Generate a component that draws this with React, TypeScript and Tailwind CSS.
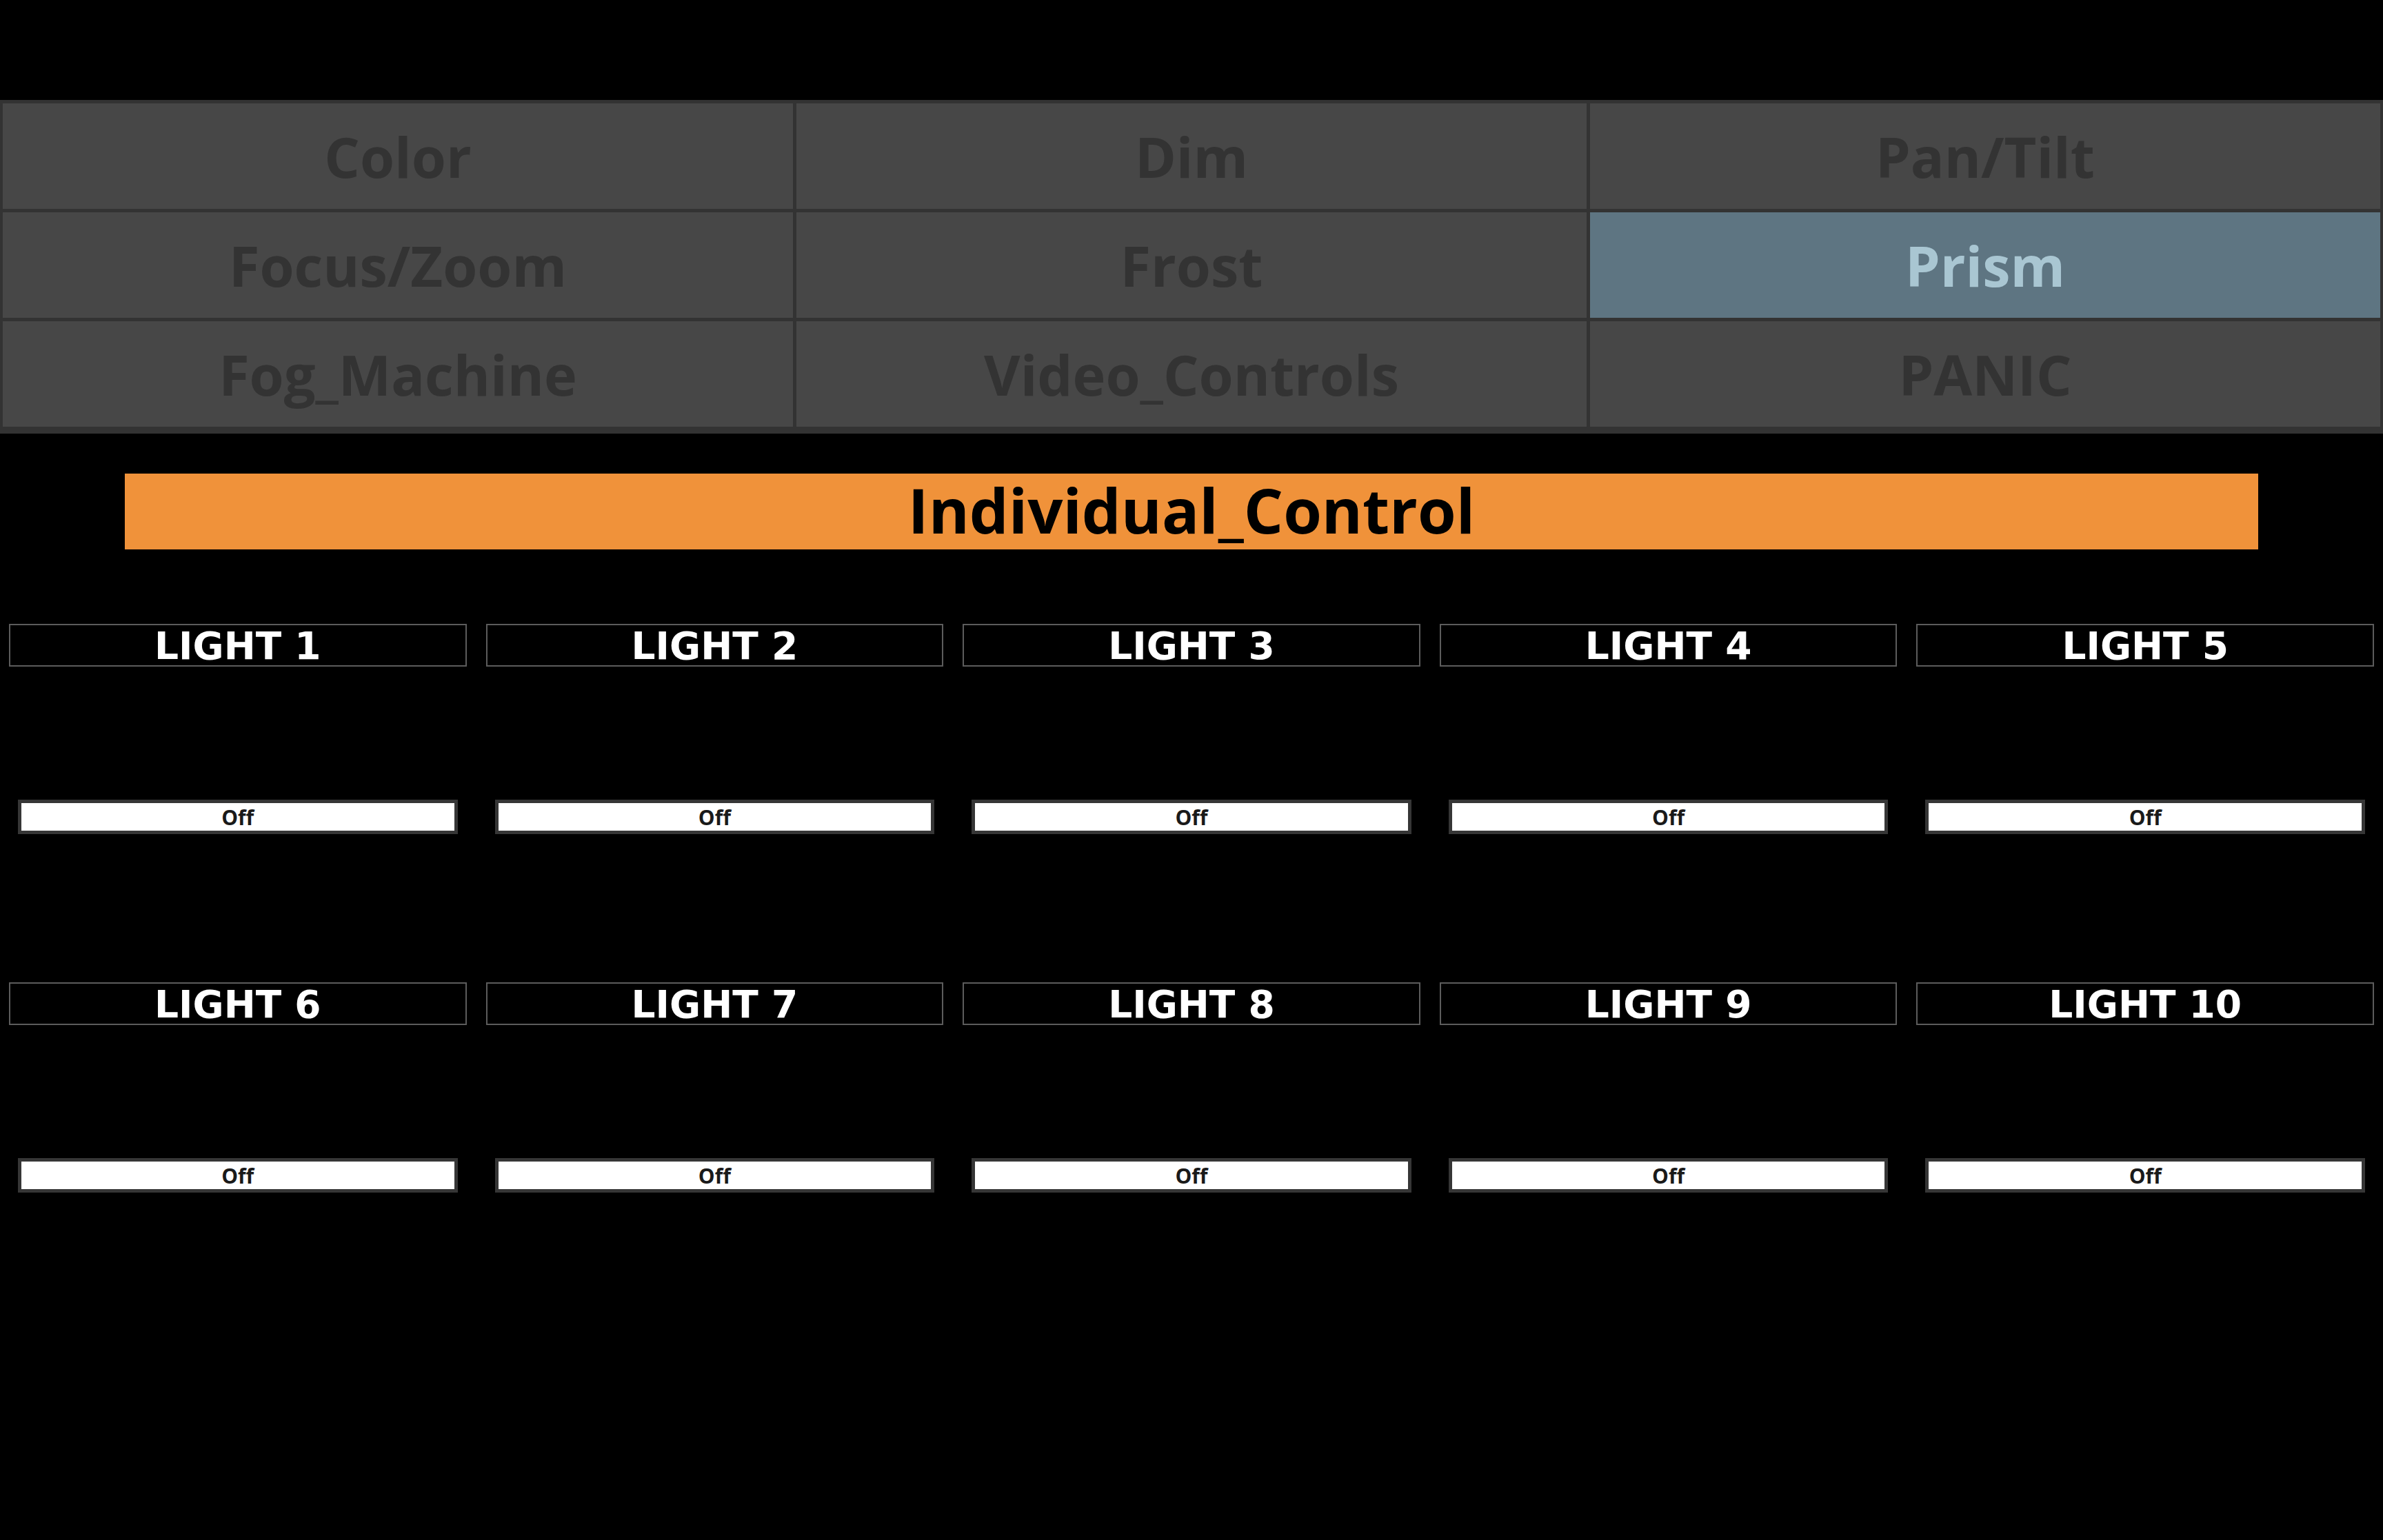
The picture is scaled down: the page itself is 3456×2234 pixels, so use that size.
const tabs = [
  "Color",
  "Dim",
  "Pan/Tilt",
  "Focus/Zoom",
  "Frost",
  "Prism",
  "Fog_Machine",
  "Video_Controls",
  "PANIC",
];

const lights = Array.from({ length: 10 }, (_, i) => `LIGHT ${i + 1}`);

function TabCell({ label, active }: { label: string; active: boolean }) {
  return (
    <div
      className={
        active
          ? "h-[153px] flex items-center justify-center bg-[#5e7582] text-[#a9c6d2]"
          : "h-[153px] flex items-center justify-center bg-[#474747] text-[#333333]"
      }
    >
      <span className="font-['Open_Sans',sans-serif] font-bold text-[81px] leading-none">
        {label}
      </span>
    </div>
  );
}

function LightCard({ name }: { name: string }) {
  return (
    <div className="flex flex-col">
      <div className="h-[62px] border-2 border-[#5c5c5c] bg-black flex items-center justify-center pt-[3px]">
        <span className="font-['DejaVu_Sans',sans-serif] font-bold text-[55px] leading-none text-white">
          {name}
        </span>
      </div>
      <button className="mt-[193px] mx-[13px] h-[50px] border-[5px] border-[#363636] bg-white flex items-center justify-center pt-[2px]">
        <span className="font-['Open_Sans',sans-serif] font-bold text-[30px] leading-none text-[#1a1a1a]">
          Off
        </span>
      </button>
    </div>
  );
}

export default function App() {
  return (
    <div className="min-h-screen w-full bg-black pt-[145px]">
      <div className="grid grid-cols-3 gap-[5px] bg-[#333333] px-[4px] pt-[5px] pb-[10px]">
        {tabs.map((t) => (
          <TabCell key={t} label={t} active={t === "Prism"} />
        ))}
      </div>

      <div className="mx-[181px] mt-[58px] h-[110px] bg-[#f0923a] flex items-center justify-center pb-[6px]">
        <span className="font-['Open_Sans',sans-serif] font-bold text-[90px] leading-none text-black">
          Individual_Control
        </span>
      </div>

      <div className="grid grid-cols-5 gap-x-[28px] gap-y-[215px] px-[13px] mt-[108px]">
        {lights.map((l) => (
          <LightCard key={l} name={l} />
        ))}
      </div>
    </div>
  );
}
